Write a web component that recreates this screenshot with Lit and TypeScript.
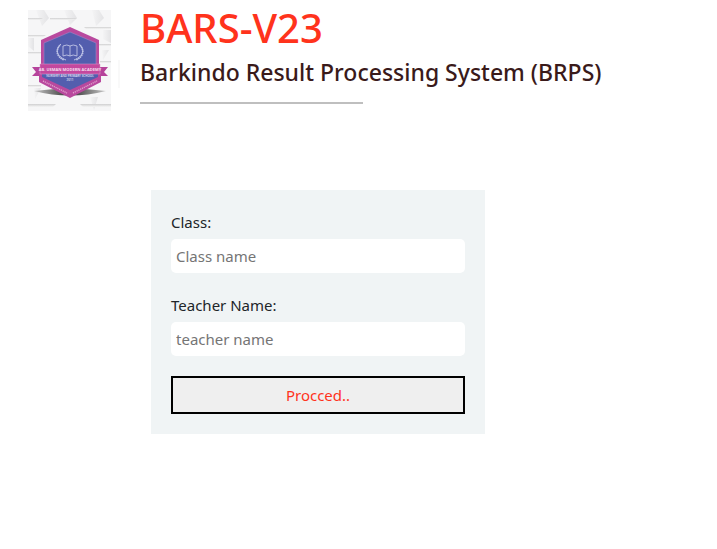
import { LitElement, html, css } from "lit";
import { customElement } from "lit/decorators.js";

@customElement("school-logo")
class SchoolLogo extends LitElement {
  static styles = css`
    :host { display: block; }
    .logo { display: block; width: 100%; }
    .name { font: 700 4px "Open Sans", sans-serif; fill: #f6dff0; }
    .level { font: 600 3px "Open Sans", sans-serif; fill: #e3e2f5; }
  `;

  render() {
    return html`
      <svg class="logo" viewBox="0 0 92 101" role="img" aria-label="AB. Usman Modern Academy">
        <defs>
          <linearGradient id="edge" x1="0" y1="0" x2="0" y2="1">
            <stop offset="0" stop-color="#cfcfd0" />
            <stop offset="1" stop-color="#f6f6f6" />
          </linearGradient>
          <linearGradient id="seam" x1="0" y1="0" x2="1" y2="0">
            <stop offset="0" stop-color="#f4f4f5" />
            <stop offset="1" stop-color="#e3e3e5" />
          </linearGradient>
          <linearGradient id="shadow" x1="0" y1="0" x2="1" y2="0">
            <stop offset="0" stop-color="#c8c8c8" />
            <stop offset="0.4" stop-color="#4c4c4c" />
            <stop offset="0.6" stop-color="#4c4c4c" />
            <stop offset="1" stop-color="#c8c8c8" />
          </linearGradient>
        </defs>
        <rect width="83" height="101" fill="#f6f6f7" />
        <g fill="url(#seam)">
          <path d="M8 0h8l5 8-7 8z" />
          <path d="M36 0h8l5 8-7 7z" />
          <path d="M64 0h7l5 8-8 8z" />
          <path d="M0 28h6v13l-6-5z" />
          <path d="M75 20h8v13l-8-4z" />
          <path d="M74 40h7l-6 10z" />
          <path d="M6 78h7l-6 11z" />
          <path d="M62 87h8l-4 13z" />
        </g>
        <g fill="url(#edge)">
          <path d="M0 8h15l-3 2H0z" />
          <path d="M22 8h27l-3 2H22z" />
          <path d="M56 17h27v2H58z" />
          <path d="M0 25h18l-3 2H0z" />
          <path d="M67 34h16v2H67z" />
          <path d="M0 42h13v2H0z" />
          <path d="M72 51h11v2H72z" />
          <path d="M0 75h13v2H0z" />
          <path d="M0 94h28l-3 3H0z" />
          <path d="M52 94h31v3H55z" />
        </g>
        <path d="M90 50h2v28h-2z" fill="#f9f9f9" />
        <path d="M6 81 Q42 76 78 81 Q42 90 6 81z" fill="url(#shadow)" />
        <path d="M42 17 L71 30 V71 L42 85 L13 71 V30z" fill="#b9499e" />
        <path d="M42 22 L68 33 V68 L42 81 L16 68 V33z" fill="#535eae" stroke="#9c86c7" stroke-width="0.6" />
        <path d="M35 36 Q39 34 42 36 Q45 34 49 36 V46 Q45 44 42 46 Q39 44 35 46z M42 36V46" fill="none" stroke="#bfc4e7" stroke-width="0.9" />
        <g fill="none" stroke="#bfc4e7">
          <path d="M33 34 C27 39 28 46 38 50 M51 34 C57 39 56 46 46 50" stroke-width="1" />
          <path d="M32 35 C27 41 29 47 36 50 M52 35 C57 41 55 47 48 50" stroke-width="1.6" stroke-dasharray="1.5 0.6" />
        </g>
        <path d="M4 57h9v9H4l4-4z M80 57h-9v9h9l-4-4z" fill="#b6439b" />
        <path d="M11 62 H73 V72 L42 88 L11 72z" fill="#b9499e" />
        <path d="M14 63 H70 V67 L42 80 L14 67z" fill="#535eae" />
        <path d="M12 54h60v10H12z" fill="#c4489e" stroke="#db9bc9" stroke-width="0.5" />
        <text class="name" x="42" y="61" text-anchor="middle">AB. USMAN MODERN ACADEMY</text>
        <text class="level" x="42" y="67" text-anchor="middle">NURSERY AND PRIMARY SCHOOL</text>
        <text class="level" x="42" y="71" text-anchor="middle">2011</text>
        <path d="M15 71 L39 83 M45 83 L69 71" fill="none" stroke="#dfa0cc" stroke-width="1.4" stroke-dasharray="1.2 0.8" />
      </svg>
    `;
  }
}

@customElement("app-root")
class AppRoot extends LitElement {
  static styles = css`
    :host {
      display: block;
      min-height: 100vh;
      background: #fff;
      color: #212529;
      font: 400 15px/24px "Noto Sans", "Open Sans", sans-serif;
    }
    * { box-sizing: border-box; }
    .header { display: flex; gap: 20px; padding: 10px 20px 0 28px; }
    .logo { flex: none; width: 92px; }
    .title {
      margin: 0;
      font-size: 40px;
      line-height: 40px;
      font-weight: 500;
      color: #ff331c;
    }
    .heading { flex: 1; margin-top: -2px; }
    .subtitle {
      margin: 9px 0 0;
      font-size: 23px;
      line-height: 30px;
      font-weight: 500;
      color: #3a1a1a;
    }
    .rule {
      width: 40%;
      height: 2px;
      margin: 15px 0 0;
      border: 0;
      background: #bfbfbf;
    }
    .form {
      display: flex;
      flex-direction: column;
      gap: 20px;
      max-width: 334px;
      margin: 79px 20px 20px 151px;
      padding: 20px;
      background: #f0f4f5;
    }
    .field { display: flex; flex-direction: column; gap: 5px; }
    .input {
      width: 100%;
      height: 34px;
      padding: 0 5px;
      border: 0;
      border-radius: 5px;
      background: #fff;
      color: inherit;
      font: inherit;
    }
    .input::placeholder { color: #757575; opacity: 1; }
    .button {
      height: 38px;
      border: 2px solid #000;
      background: #efefef;
      color: #ff331c;
      font: inherit;
      cursor: pointer;
    }
  `;

  render() {
    return html`
      <header class="header">
        <school-logo class="logo"></school-logo>
        <div class="heading">
          <h1 class="title">BARS-V23</h1>
          <h2 class="subtitle">Barkindo Result Processing System (BRPS)</h2>
          <hr class="rule" />
        </div>
      </header>
      <form class="form">
        <div class="field">
          <label for="class-name">Class:</label>
          <input class="input" id="class-name" type="text" placeholder="Class name" />
        </div>
        <div class="field">
          <label for="teacher-name">Teacher Name:</label>
          <input class="input" id="teacher-name" type="text" placeholder="teacher name" />
        </div>
        <button class="button" type="button">Procced..</button>
      </form>
    `;
  }
}
